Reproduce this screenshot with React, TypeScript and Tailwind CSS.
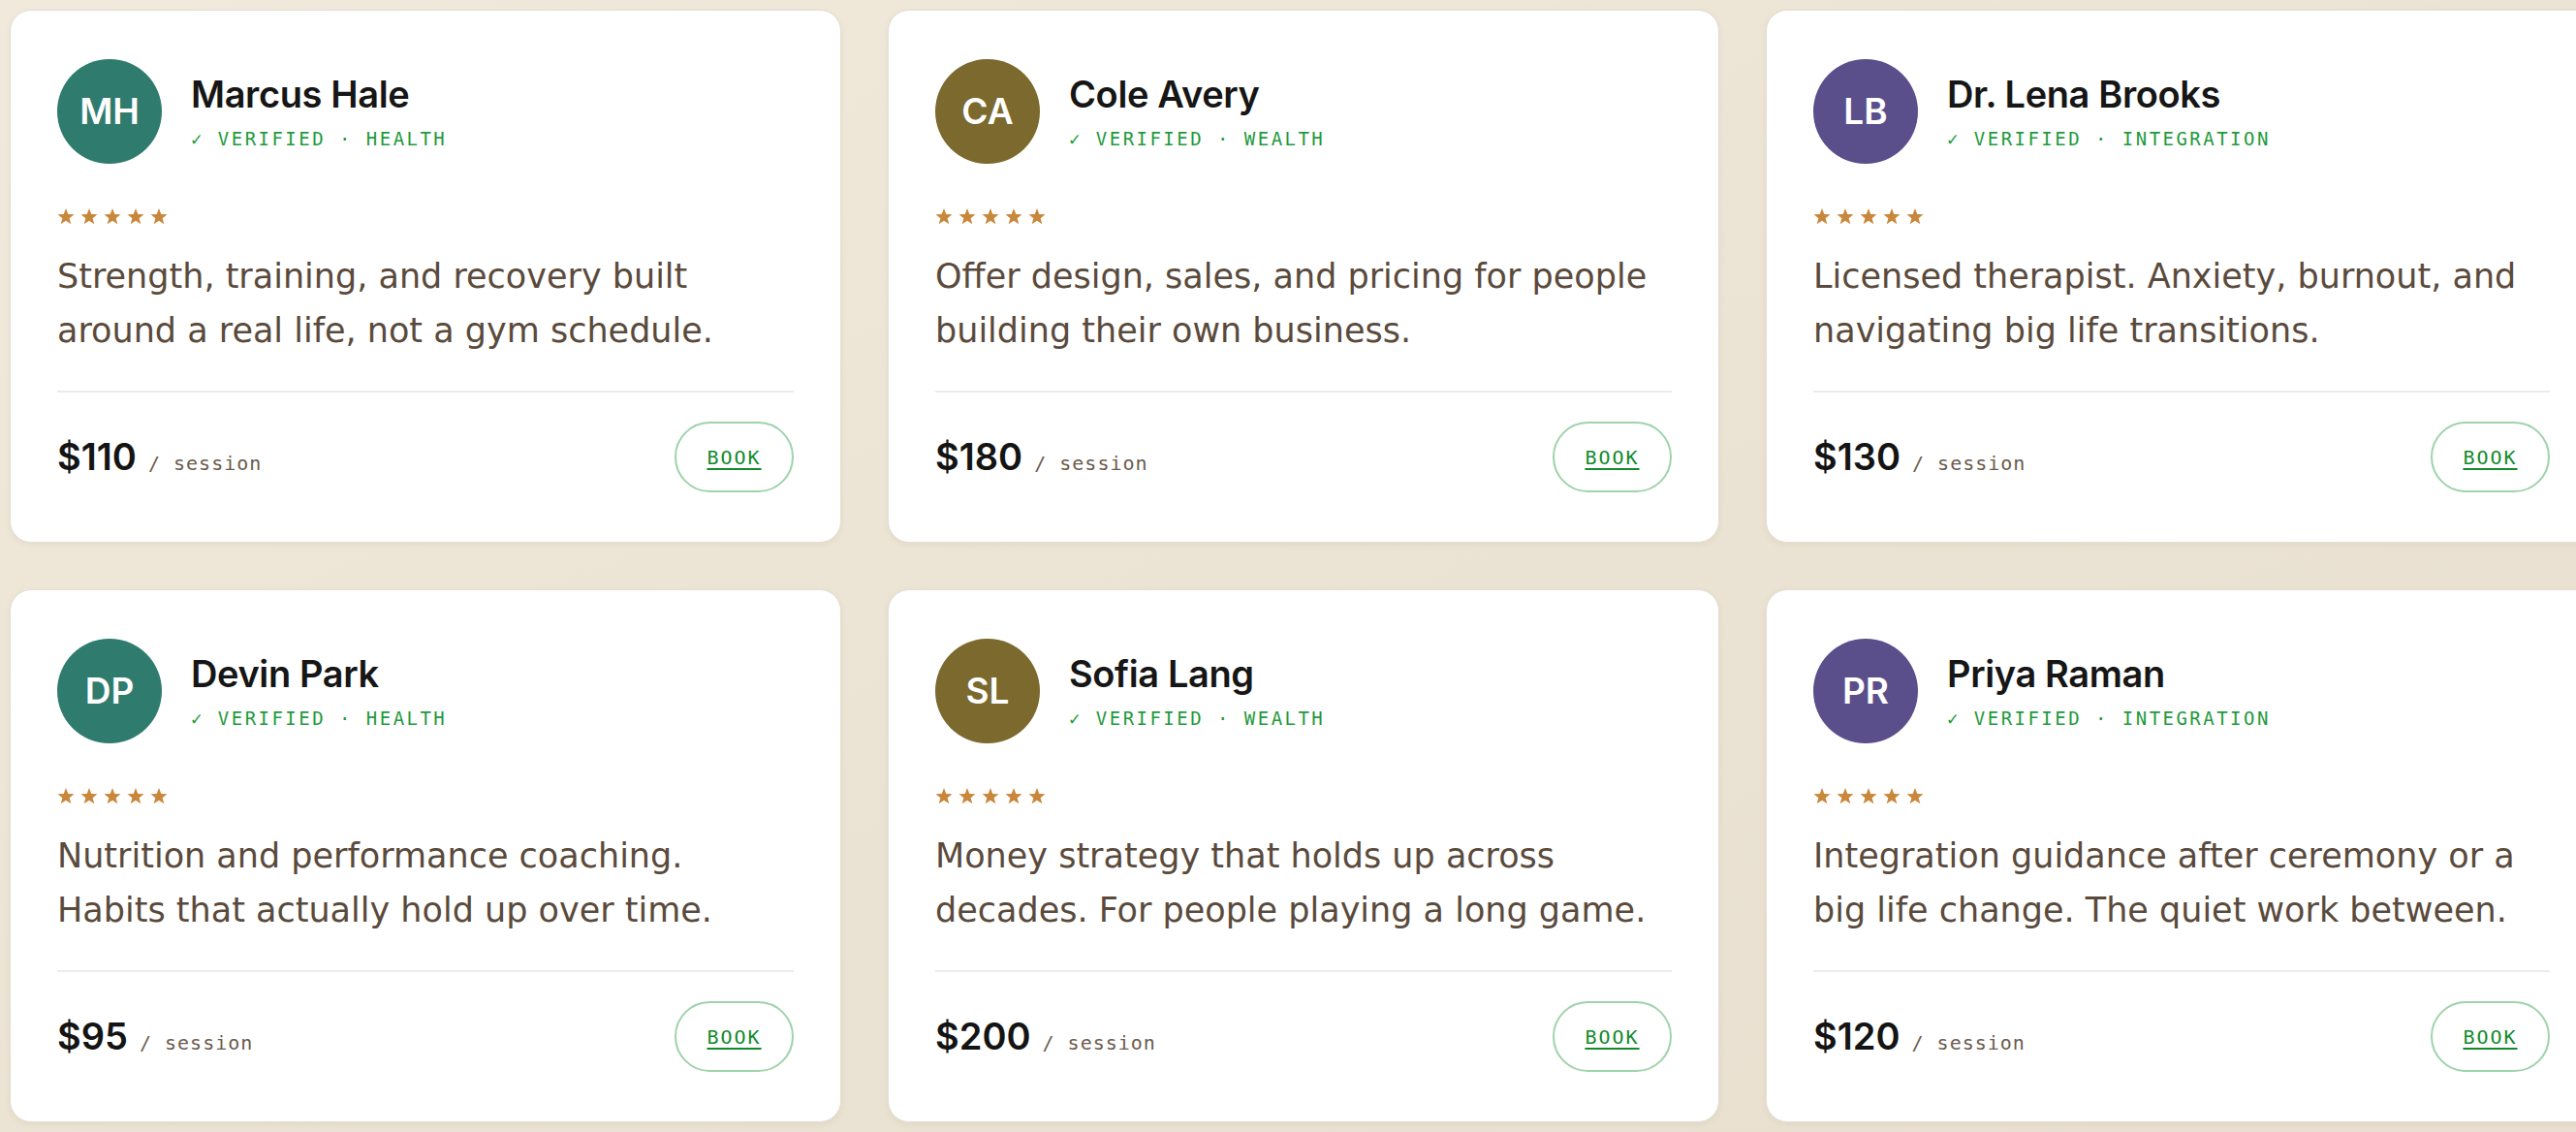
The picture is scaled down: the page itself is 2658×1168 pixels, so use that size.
import { Fragment } from "react";

type Coach = {
  initials: string;
  name: string;
  field: string;
  tone: string;
  blurb: string;
  price: number;
};

const coaches: Coach[] = [
  {
    initials: "MH",
    name: "Marcus Hale",
    field: "HEALTH",
    tone: "bg-[#2f7c6e]",
    blurb: "Strength, training, and recovery built around a real life, not a gym schedule.",
    price: 110,
  },
  {
    initials: "CA",
    name: "Cole Avery",
    field: "WEALTH",
    tone: "bg-[#7b692e]",
    blurb: "Offer design, sales, and pricing for people building their own business.",
    price: 180,
  },
  {
    initials: "LB",
    name: "Dr. Lena Brooks",
    field: "INTEGRATION",
    tone: "bg-[#5b4f8b]",
    blurb: "Licensed therapist. Anxiety, burnout, and navigating big life transitions.",
    price: 130,
  },
  {
    initials: "DP",
    name: "Devin Park",
    field: "HEALTH",
    tone: "bg-[#2f7c6e]",
    blurb: "Nutrition and performance coaching. Habits that actually hold up over time.",
    price: 95,
  },
  {
    initials: "SL",
    name: "Sofia Lang",
    field: "WEALTH",
    tone: "bg-[#7b692e]",
    blurb: "Money strategy that holds up across decades. For people playing a long game.",
    price: 200,
  },
  {
    initials: "PR",
    name: "Priya Raman",
    field: "INTEGRATION",
    tone: "bg-[#5b4f8b]",
    blurb: "Integration guidance after ceremony or a big life change. The quiet work between.",
    price: 120,
  },
];

const Star = () => (
  <svg width="18" height="17" viewBox="0 0 24 23" className="fill-[#c9873b]">
    <polygon points="12,0 15.1,8 23.5,8.4 16.9,13.7 19.2,22 12,17.3 4.8,22 7.1,13.7 0.5,8.4 8.9,8" />
  </svg>
);

const CoachCard = ({ coach }: { coach: Coach }) => {
  return (
    <div className="flex flex-col bg-white rounded-[22px] border border-[#e4ded4] shadow-[0_2px_6px_rgba(120,100,70,0.08)] pt-[50px] pb-[51px] px-12">
      {/* Header */}
      <div className="flex items-center gap-[30px]">
        <div
          className={`${coach.tone} w-[108px] h-[108px] rounded-full flex items-center justify-center text-white text-[37px] font-semibold font-['Inter',sans-serif]`}
        >
          {coach.initials}
        </div>
        <div className="flex flex-col">
          <h2 className="text-[38px] leading-[42px] font-semibold tracking-[-0.01em] text-[#161616] font-['Inter',sans-serif]">
            {coach.name}
          </h2>
          <p className="mt-[13px] text-[19px] leading-[24px] tracking-[0.13em] text-[#1f9a3c] font-['DejaVu_Sans_Mono',monospace]">
            ✓ VERIFIED · {coach.field}
          </p>
        </div>
      </div>

      {/* Rating */}
      <div className="flex gap-[6px] mt-[46px]">
        {[0, 1, 2, 3, 4].map((i) => (
          <Fragment key={i}>
            <Star />
          </Fragment>
        ))}
      </div>

      <p className="mt-[25px] text-[35px] leading-[56px] text-[#5a4a3c] font-['DejaVu_Sans',sans-serif]">
        {coach.blurb}
      </p>

      <div className="mt-[34px] h-[2px] bg-[#ebebeb]" />

      {/* Price + booking */}
      <div className="mt-[30px] flex items-center justify-between">
        <div className="flex items-baseline gap-[12px]">
          <span className="text-[38px] font-semibold text-[#141414] font-['Inter',sans-serif]">
            ${coach.price}
          </span>
          <span className="text-[20px] tracking-[0.05em] text-[#6b5b4d] font-['DejaVu_Sans_Mono',monospace]">
            / session
          </span>
        </div>
        <button className="h-[73px] w-[123px] rounded-full border-2 border-[#9fd3aa] text-[20px] tracking-[0.1em] text-[#138a2c] underline underline-offset-4 font-['DejaVu_Sans_Mono',monospace]">
          BOOK
        </button>
      </div>
    </div>
  );
};

const App = () => {
  return (
    <div className="w-full h-[1168px] overflow-hidden bg-gradient-to-br from-[#f1eadc] via-[#ebe3d3] to-[#e8dfcf] p-[10px]">
      <div className="grid grid-cols-[repeat(3,858px)] gap-x-[48px] gap-y-[48px]">
        {coaches.map((coach) => (
          <CoachCard key={coach.name} coach={coach} />
        ))}
      </div>
    </div>
  );
};

export default App;
